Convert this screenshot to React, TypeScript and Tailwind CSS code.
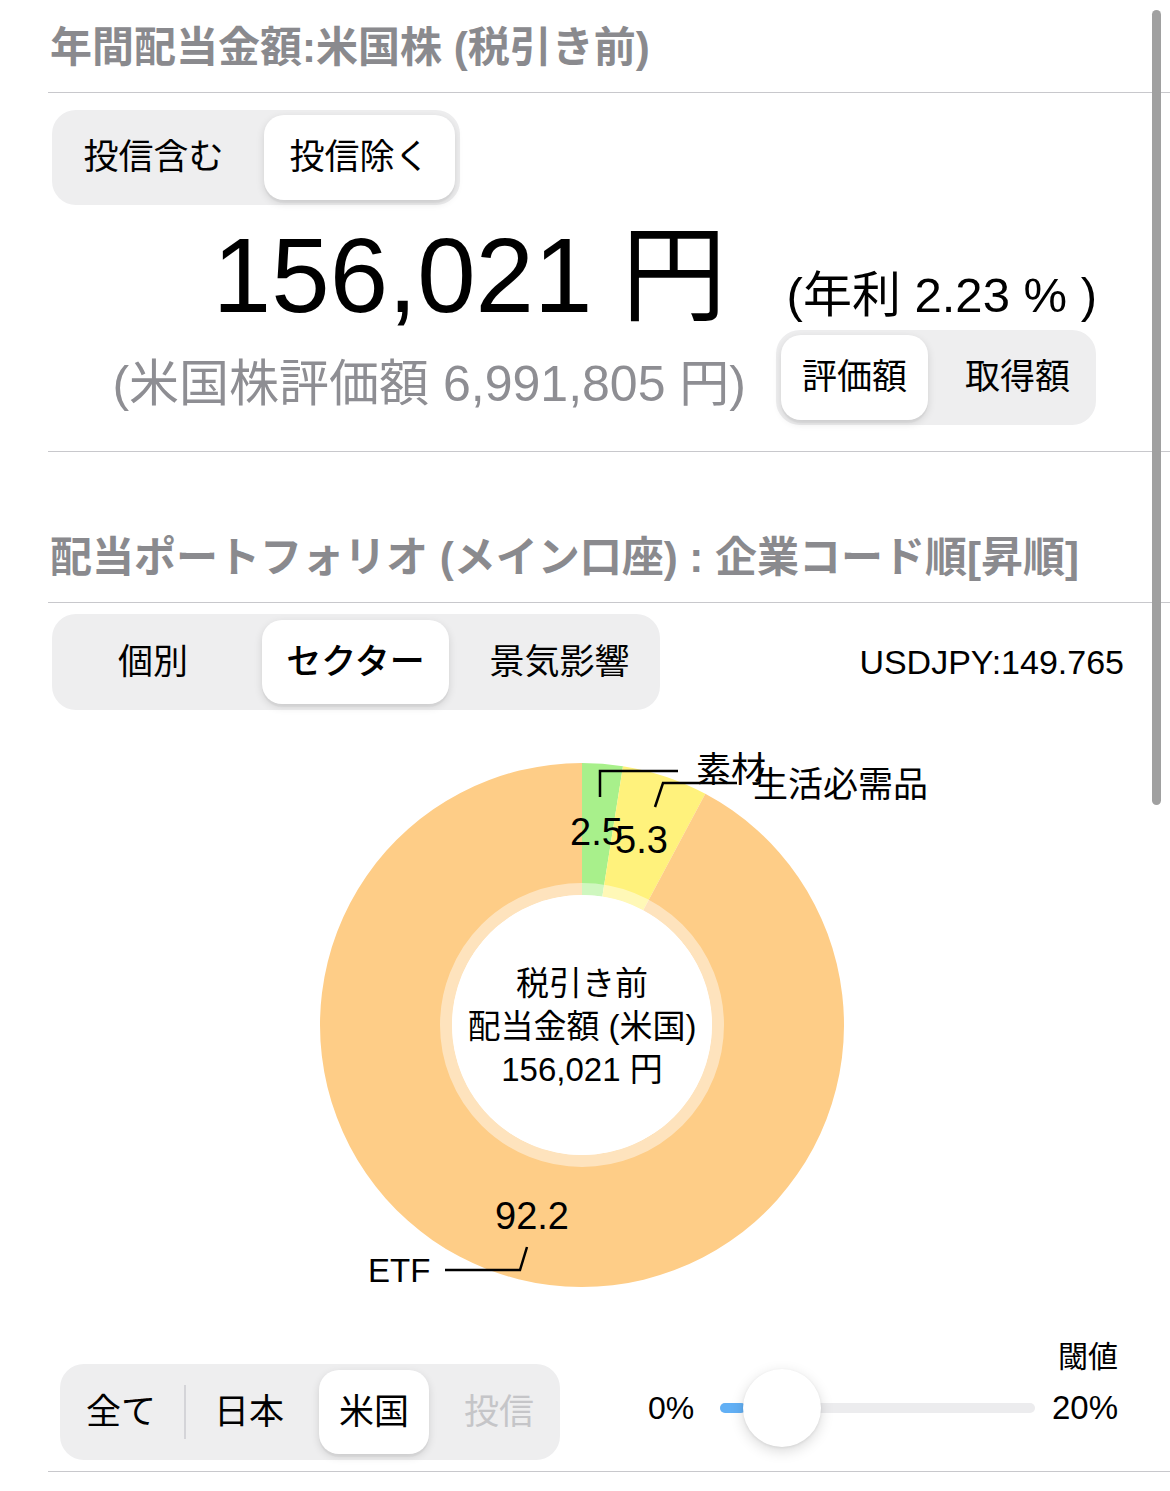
import React from "react";

// Donut geometry (svg coords; svg starts at page y=710)
const CX = 582;
const CY = 315;
const R_OUT = 262;
const R_IN = 130;
const R_RING = 142;

type Slice = { name: string; pct: number; color: string };

const SLICES: Slice[] = [
  { name: "素材", pct: 2.5, color: "#a8f08b" },
  { name: "生活必需品", pct: 5.3, color: "#fff27c" },
  { name: "ETF", pct: 92.2, color: "#fecd87" },
];

function pt(r: number, deg: number): [number, number] {
  const a = (deg * Math.PI) / 180;
  return [CX + r * Math.sin(a), CY - r * Math.cos(a)];
}

function sector(r0: number, r1: number, a0: number, a1: number): string {
  const [x0, y0] = pt(r1, a0);
  const [x1, y1] = pt(r1, a1);
  const [x2, y2] = pt(r0, a1);
  const [x3, y3] = pt(r0, a0);
  const large = a1 - a0 > 180 ? 1 : 0;
  return `M${x0} ${y0} A${r1} ${r1} 0 ${large} 1 ${x1} ${y1} L${x2} ${y2} A${r0} ${r0} 0 ${large} 0 ${x3} ${y3} Z`;
}

function SectorChart(): JSX.Element {
  let acc = 0;
  const paths = SLICES.map((s) => {
    const a0 = (acc / 100) * 360;
    acc += s.pct;
    const a1 = (acc / 100) * 360;
    return <path key={s.name} d={sector(R_IN, R_OUT, a0, a1)} fill={s.color} />;
  });
  return (
    <svg width={1170} height={630} className="block">
      {paths}
      {/* translucent inner ring */}
      <circle cx={CX} cy={CY} r={(R_IN + R_RING) / 2} fill="none" stroke="#ffffff" strokeWidth={R_RING - R_IN} opacity={0.45} />
      <circle cx={CX} cy={CY} r={R_IN} fill="#ffffff" />

      {/* center label */}
      <g fontSize={33} textAnchor="middle" fill="#000">
        <text x={CX} y={285}>税引き前</text>
        <text x={CX} y={328}>配当金額 (米国)</text>
        <text x={CX} y={371}>156,021 円</text>
      </g>

      {/* leader lines */}
      <g stroke="#000" strokeWidth={2.5} fill="none">
        <path d="M600 87 L600 61 L678 61" />
        <path d="M655 97 L663 73 L737 73" />
        <path d="M527 537 L520 560 L445 560" />
      </g>

      <g fontSize={38} fill="#000">
        <text x={570} y={135}>2.5</text>
        <text x={615} y={143}>5.3</text>
        <text x={495} y={519}>92.2</text>
      </g>
      <g fontSize={35} fill="#000">
        <text x={696} y={72}>素材</text>
        <text x={753} y={87}>生活必需品</text>
        <text x={368} y={572} fontSize={33}>ETF</text>
      </g>
    </svg>
  );
}

export default function App(): JSX.Element {
  return (
    <div className="relative h-[1491px] w-[1170px] overflow-hidden bg-white font-['Liberation_Sans','Noto_Sans_CJK_JP',sans-serif] text-black">
      {/* annual dividend header */}
      <div className="ml-[48px] flex h-[93px] items-end border-b border-[#c8c8cc] pb-[21px] pl-[2px]">
        <h1 className="text-[42px] font-bold leading-[46px] text-[#8a8a8e]">年間配当金額:米国株 (税引き前)</h1>
      </div>

      <div className="ml-[48px] flex h-[359px] flex-col border-b border-[#c8c8cc]">
        <div className="ml-[4px] mt-[17px] flex h-[95px] w-[408px] items-center rounded-[24px] bg-[#eeeeef] p-[5px]">
          <div className="flex h-full w-[193px] items-center justify-center text-[35px]">投信含む</div>
          <div className="ml-[14px] flex h-full w-[191px] items-center justify-center rounded-[20px] bg-white text-[35px] shadow-[0_3px_8px_rgba(0,0,0,0.12),0_3px_1px_rgba(0,0,0,0.04)]">
            投信除く
          </div>
        </div>

        <div className="mt-[18px] flex h-[105px] items-baseline justify-end pr-[73px]">
          <span className="text-[105px] leading-none">156,021 円</span>
          <span className="ml-[60px] text-[49px] leading-none">(年利 2.23 % )</span>
        </div>

        <div className="mt-[2px] flex h-[95px] items-center justify-end pr-[74px]">
          <span className="mt-[12px] text-[50px] leading-[56px] text-[#8e8e93]">(米国株評価額 6,991,805 円)</span>
          <div className="ml-[30px] flex h-[95px] w-[320px] items-center rounded-[24px] bg-[#eeeeef] p-[5px]">
            <div className="flex h-full w-[147px] items-center justify-center rounded-[20px] bg-white text-[35px] shadow-[0_3px_8px_rgba(0,0,0,0.12),0_3px_1px_rgba(0,0,0,0.04)]">
              評価額
            </div>
            <div className="flex h-full flex-1 items-center justify-center pl-[16px] text-[35px]">取得額</div>
          </div>
        </div>
      </div>

      {/* portfolio header */}
      <div className="ml-[48px] flex h-[151px] items-end border-b border-[#c8c8cc] pb-[21px] pl-[2px]">
        <h2 className="text-[42px] font-bold leading-[46px] text-[#8a8a8e]">
          配当ポートフォリオ (メイン口座) : 企業コード順[昇順]
        </h2>
      </div>

      <div className="ml-[48px] flex items-center justify-between pl-[4px] pr-[46px] pt-[11px]">
        <div className="flex h-[96px] w-[608px] items-center rounded-[24px] bg-[#eeeeef] p-[6px]">
          <div className="flex h-full w-[190px] items-center justify-center text-[35px]">個別</div>
          <div className="ml-[14px] flex h-[84px] w-[187px] items-center justify-center rounded-[20px] bg-white text-[35px] font-medium shadow-[0_3px_8px_rgba(0,0,0,0.12),0_3px_1px_rgba(0,0,0,0.04)]">
            セクター
          </div>
          <div className="flex h-full w-[205px] items-center justify-center pl-[16px] text-[35px]">景気影響</div>
        </div>
        <span className="text-[34px] leading-none">USDJPY:149.765</span>
      </div>

      <SectorChart />

      {/* filter + threshold slider */}
      <div className="ml-[48px] flex h-[132px] border-b border-[#c8c8cc]">
        <div className="ml-[12px] mt-[24px] flex h-[96px] w-[500px] items-center rounded-[24px] bg-[#eeeeef] p-[6px]">
          <div className="flex h-full w-[110px] items-center justify-center text-[35px]">全て</div>
          <div className="ml-[8px] h-[54px] w-[2px] bg-[#d4d4d8]" />
          <div className="flex h-full w-[126px] items-center justify-center text-[35px]">日本</div>
          <div className="ml-[7px] flex h-[84px] w-[110px] items-center justify-center rounded-[20px] bg-white text-[35px] shadow-[0_3px_8px_rgba(0,0,0,0.12),0_3px_1px_rgba(0,0,0,0.04)]">
            米国
          </div>
          <div className="flex h-full flex-1 items-center justify-center pl-[15px] text-[35px] text-[#c5c5c8]">投信</div>
        </div>

        <div className="ml-auto mr-[52px] flex w-[470px] flex-col">
          <div className="text-right text-[30px] leading-[34px]">閾値</div>
          <div className="mt-[2px] flex h-[64px] items-center">
            <span className="w-[50px] text-[32px]">0%</span>
            <div className="relative ml-[22px] h-[10px] flex-1 rounded-full bg-[#ececee]">
              <div className="absolute left-0 top-0 h-full w-[26px] rounded-full bg-[#62b0f5]" />
              <div className="absolute left-[23px] top-1/2 h-[78px] w-[78px] -translate-y-1/2 rounded-full bg-white shadow-[0_4px_14px_rgba(0,0,0,0.15),0_1px_3px_rgba(0,0,0,0.08)]" />
            </div>
            <span className="ml-[13px] w-[70px] text-right text-[33px]">20%</span>
          </div>
        </div>
      </div>

      {/* scroll indicator */}
      <div className="absolute left-[1152px] top-[10px] h-[795px] w-[9px] rounded-full bg-[#a0a0a0]" />
    </div>
  );
}
